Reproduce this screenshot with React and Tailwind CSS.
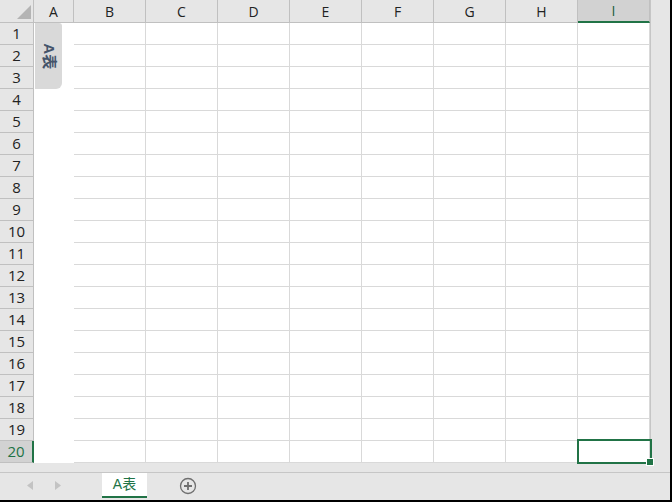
import React from 'react';

const cols = ['B', 'C', 'D', 'E', 'F', 'G', 'H', 'I'];
const rows = Array.from({ length: 20 }, (_, i) => i + 1);
const font = { fontFamily: '"Open Sans", "Liberation Sans", "Noto Sans CJK SC", sans-serif' };

const App = () => {
  return (
    <div className="w-[672px] h-[502px] bg-[#e6e6e6] border-r-2 border-b-2 border-black flex flex-col overflow-hidden" style={font}>
      <div className="relative flex h-[463px]">
        {/* Sheet grid */}
        <div className="w-[650px] flex flex-col bg-white">
          {/* Column headers */}
          <div className="flex h-[23px] bg-[#e6e6e6]">
            <div className="w-[34px] h-full border-r border-b border-[#c0c0c0] flex items-end justify-end pr-[2px] pb-[3px]">
              <svg width="14" height="14" viewBox="0 0 14 14">
                <polygon points="14,0 14,14 0,14" fill="#b4b4b4" />
              </svg>
            </div>
            <div className="w-[40px] h-full border-r border-b border-[#c0c0c0] flex items-center justify-center text-[14px] text-[#222]">A</div>
            {cols.map((c) => (
              <div
                key={c}
                className={`w-[72px] h-full border-r flex items-center justify-center text-[14px] ${
                  c === 'I'
                    ? 'bg-[#d2d2d2] border-[#c0c0c0] border-b-2 border-b-[#217346] text-[#1d5c3a]'
                    : 'border-b border-[#c0c0c0] text-[#222]'
                }`}
              >
                {c}
              </div>
            ))}
          </div>

          {/* Rows */}
          {rows.map((r) => (
            <div key={r} className="flex h-[22px]">
              <div
                className={`w-[34px] h-full border-b flex items-center justify-center text-[15px] ${
                  r === 20
                    ? 'bg-[#d2d2d2] border-b-[#c0c0c0] border-r-2 border-r-[#217346] text-[#217346]'
                    : 'bg-[#e6e6e6] border-b-[#c0c0c0] border-r border-r-[#c0c0c0] text-[#222]'
                }`}
              >
                {r}
              </div>
              <div className="w-[40px] h-full bg-white" />
              {cols.map((c) => (
                <div key={c} className="w-[72px] h-full border-r border-b border-[#d9d9d9]" />
              ))}
            </div>
          ))}
        </div>

        {/* Vertical scroll area */}
        <div className="flex-1 border-l border-[#c6c6c6] bg-[#e6e6e6]" />

        {/* Shape tab over column A */}
        <div className="absolute left-[35px] top-[23px] w-[27px] h-[66px] bg-[#d9d9d9] rounded-tr-[3px] rounded-br-[6px] flex items-center justify-center">
          <span className="rotate-90 whitespace-nowrap text-[15px] font-bold text-[#44546a]" style={{ fontFamily: '"Liberation Sans", "Noto Sans CJK SC", sans-serif' }}>
            A表
          </span>
        </div>

        {/* Active cell I20 */}
        <div className="absolute left-[577px] top-[439px] w-[75px] h-[25px] border-2 border-[#217346]">
          <div className="absolute right-[-4px] bottom-[-4px] w-[6px] h-[6px] bg-[#217346] border border-white box-content" />
        </div>
      </div>

      {/* Horizontal strip */}
      <div className="h-[10px] border-b border-[#c6c6c6]" />

      {/* Sheet tabs */}
      <div className="flex items-start h-[27px]">
        <div className="w-[102px] h-[25px] flex items-center pl-[27px] gap-[22px]">
          <svg width="6" height="9" viewBox="0 0 6 9">
            <polygon points="6,0 6,9 0,4.5" fill="#c3c3c3" />
          </svg>
          <svg width="6" height="9" viewBox="0 0 6 9">
            <polygon points="0,0 0,9 6,4.5" fill="#c3c3c3" />
          </svg>
        </div>
        <div className="w-[45px] h-[25px] bg-white border-b-2 border-[#217346] flex items-center justify-center text-[14px] text-[#217346]" style={{ fontFamily: '"Liberation Sans", "Noto Sans CJK SC", sans-serif' }}>
          A表
        </div>
        <div className="ml-[32px] h-[25px] flex items-center">
          <svg width="18" height="18" viewBox="0 0 18 18">
            <circle cx="9" cy="9" r="7.5" fill="none" stroke="#6f6f6f" strokeWidth="1.3" />
            <path d="M9 5v8M5 9h8" stroke="#6f6f6f" strokeWidth="1.8" />
          </svg>
        </div>
      </div>
    </div>
  );
};

export default App;
